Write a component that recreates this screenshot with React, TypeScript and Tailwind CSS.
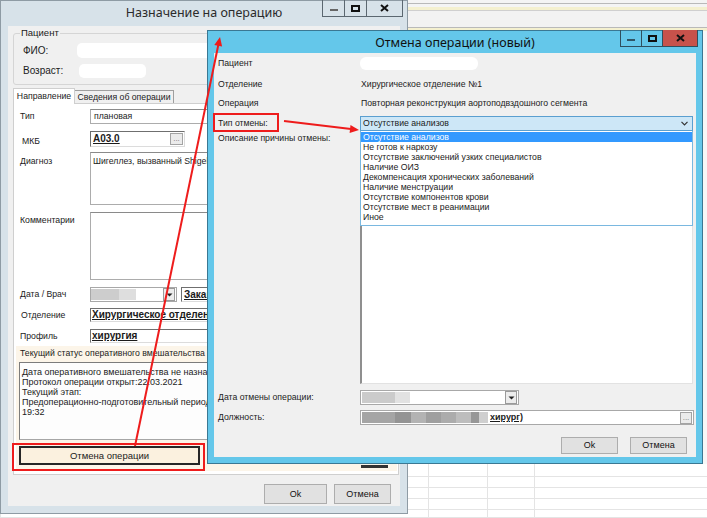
import React from "react";

const sunken =
  "border border-t-[#6f6f6f] border-l-[#6f6f6f] border-r-[#dcdcdc] border-b-[#dcdcdc] bg-white";
const plainBox = "border border-[#acacac] border-t-[#8a8a8a] bg-white";
const winBtn =
  "flex items-center justify-center border border-[#adadad] bg-[#e1e1e1] text-[9px] text-[#111]";

function XGlyph() {
  return (
    <svg width="9" height="8" viewBox="0 0 9 8">
      <path d="M1 1 L8 7 M8 1 L1 7" stroke="#111" strokeWidth="2" fill="none" />
    </svg>
  );
}

function DownTri() {
  return (
    <svg width="7" height="4" viewBox="0 0 7 4">
      <path d="M0.5 0.5 H6.5 L3.5 3.5 Z" fill="#222" />
    </svg>
  );
}

function Backdrop() {
  const cells = Array.from({ length: 20 });
  return (
    <div className="flex h-full w-full flex-col">
      <div className="h-[3px] bg-[#f4f4f4]" />
      <div className="h-px bg-[#b9b9b9]" />
      <div className="h-[3px] bg-[#f4f4f4]" />
      <div className="h-[3px] bg-[#f4f0cf]" />
      <div className="h-px bg-[#cfcfcf]" />
      <div className="h-[16px] bg-[#f2f2f2]" />
      <div className="h-px bg-[#b9b9b9]" />
      <div className="h-[3px] bg-[#f4f0cf]" />
      <div className="flex-1 bg-[#f7f7f7]" />
      <div className="grid h-[54px] grid-cols-[428px_59px_47px_1fr] grid-rows-[13px_11px_11px_11px_8px] bg-white">
        {cells.map((_, i) => (
          <div key={i} className="border-b border-l border-[#e4e4e4]" />
        ))}
      </div>
    </div>
  );
}

function MainWindow() {
  return (
    <div className="absolute left-0 top-0 flex h-[514px] w-[408px] flex-col border border-[#8e9ba4] bg-[#d7e2e9]">
      {/* title bar */}
      <div className="grid h-[25px] grid-cols-[1fr_auto_1fr] items-start">
        <div />
        <div className="mt-[5px] font-['Noto_Sans',sans-serif] text-[12.5px] leading-[14px] text-[#2b2b2b]">
          Назначение на операцию
        </div>
        <div className="flex justify-end pr-[4px]">
          <div className="-mt-px flex h-[17px] border border-t-0 border-[#5b6770]">
            <div className="flex w-[22px] items-end justify-center border-r border-[#5b6770] pb-[5px]">
              <div className="h-[2px] w-[8px] bg-[#666]" />
            </div>
            <div className="flex w-[22px] items-center justify-center border-r border-[#5b6770]">
              <div className="h-[7px] w-[9px] border-2 border-[#111]" />
            </div>
            <div className="flex w-[35px] items-center justify-center">
              <XGlyph />
            </div>
          </div>
        </div>
      </div>

      {/* client */}
      <div className="mx-[7px] mb-[7px] flex flex-1 flex-col bg-[#f0f0f0]">
        <fieldset className="mx-[5px] mt-[2px] h-[57px] rounded-[3px] border border-[#d5d5d5]">
          <legend className="ml-[6px] px-px text-[9.5px] leading-[10px]">Пациент</legend>
          <div className="flex flex-col">
            <div className="mt-[5px] flex h-[15px] items-center">
              <span className="w-[63px] shrink-0 pl-[9px] text-[10px]">ФИО:</span>
              <div className="h-[15px] w-[300px] rounded-[5px] bg-white" />
            </div>
            <div className="mt-[6px] flex h-[14px] items-center">
              <span className="w-[65px] shrink-0 pl-[9px] text-[10px]">Возраст:</span>
              <div className="h-[14px] w-[67px] rounded-[5px] bg-white" />
            </div>
          </div>
        </fieldset>

        {/* tabs */}
        <div className="ml-[5px] mt-[3px] flex h-[15px] items-end">
          <div className="relative z-10 -mb-px flex h-[16px] w-[62px] items-center justify-center border border-b-0 border-[#cfcfcf] bg-white">
            Направление
          </div>
          <div className="flex h-[13px] w-[99px] items-center justify-center border border-b-0 border-l-0 border-[#9f9f9f] bg-[#f0f0f0]">
            Сведения об операции
          </div>
        </div>

        {/* tab panel */}
        <div className="ml-[5px] flex h-[372px] w-[386px] flex-col border border-[#cfcfcf] bg-white">
          <div className="mt-[5px] flex h-[15px] items-center">
            <span className="w-[76px] shrink-0 pl-[6px]">Тип</span>
            <div className={`mr-[6px] flex h-full flex-1 items-center pl-[3px] ${plainBox}`}>плановая</div>
          </div>

          <div className="mt-[7px] flex h-[16px] items-center">
            <span className="mt-[4px] w-[76px] shrink-0 pl-[8px]">МКБ</span>
            <div className={`flex h-full w-[95px] items-center justify-between pl-[2px] pr-px ${sunken}`}>
              <span className="text-[10px] font-bold underline">А03.0</span>
              <div className="flex h-[12px] w-[13px] items-center justify-center border border-[#a3a3a3] bg-[#ebebeb] text-[8px] text-[#777]">
                ...
              </div>
            </div>
          </div>

          <div className="mt-[5px] flex h-[53px] items-start">
            <span className="w-[76px] shrink-0 pl-[6px] pt-[5px]">Диагноз</span>
            <div className={`mr-[6px] h-full flex-1 whitespace-nowrap pl-[2px] pt-[4px] ${plainBox}`}>
              Шигеллез, вызванный Shigella
            </div>
          </div>

          <div className="mt-[7px] flex h-[68px] items-start">
            <span className="w-[76px] shrink-0 pl-[6px] pt-[4px]">Комментарии</span>
            <div className={`mr-[6px] h-full flex-1 ${plainBox}`} />
          </div>

          <div className="mt-[7px] flex h-[15px] items-center">
            <span className="w-[76px] shrink-0 pl-[6px]">Дата / Врач</span>
            <div className="flex h-full w-[87px] items-center border border-[#a8a8a8] bg-white">
              <div className="h-[11px] w-[28px] bg-[#cdcdcd]" />
              <div className="h-[11px] w-[17px] bg-[#dedede]" />
              <div className="ml-auto mr-px flex h-[13px] w-[12px] items-center justify-center border border-[#9a9a9a] bg-[#ececec]">
                <DownTri />
              </div>
            </div>
            <div className={`ml-[4px] mr-[6px] flex h-full flex-1 items-center pl-[2px] ${sunken}`}>
              <span className="text-[10px] font-bold underline">Закам</span>
            </div>
          </div>

          <div className="mt-[6px] flex h-[14px] items-center">
            <span className="w-[76px] shrink-0 pl-[7px]">Отделение</span>
            <div className={`mr-[6px] flex h-full flex-1 items-center pl-px ${sunken}`}>
              <span className="whitespace-nowrap text-[10px] font-bold underline">Хирургическое отделени</span>
            </div>
          </div>

          <div className="mt-[7px] flex h-[14px] items-center">
            <span className="w-[76px] shrink-0 pl-[6px]">Профиль</span>
            <div className={`mr-[6px] flex h-full flex-1 items-center pl-px ${sunken}`}>
              <span className="text-[10px] font-bold underline">хирургия</span>
            </div>
          </div>

          {/* status block */}
          <div className="mb-[3px] ml-[2px] mr-px mt-[3px] flex flex-1 flex-col bg-[#fcf5e9]">
            <div className="flex h-[14px] items-center whitespace-nowrap pl-[4px]">
              Текущий статус оперативного вмешательства
            </div>
            <div className="ml-[3px] mr-[6px] mt-[2px] h-[78px] whitespace-nowrap border border-[#a6a6a6] border-l-[#7c7c7c] border-t-[#7c7c7c] bg-[#fdfdfd] pl-[2px] pt-[4px] text-[9px] leading-[10px]">
              <div>Дата оперативного вмешательства не назнач</div>
              <div>Протокол операции открыт:22.03.2021</div>
              <div>Текущий этап:</div>
              <div>Предоперационно-подготовительный период С</div>
              <div>19:32</div>
            </div>
            <div className="mt-[6px] flex items-start">
              <div className="ml-[3px] flex h-[19px] w-[181px] items-center justify-center border-2 border-[#262626] bg-[#fbf1df] text-[9.5px]">
                Отмена операции
              </div>
              <div className="ml-[161px] h-[22px] w-[27px] border-b-[3px] border-[#333]" />
            </div>
          </div>
        </div>

        {/* bottom buttons */}
        <div className="mt-[9px] flex justify-end gap-[7px] pr-[9px]">
          <div className={`h-[20px] w-[63px] ${winBtn}`}>Ok</div>
          <div className={`h-[20px] w-[57px] ${winBtn}`}>Отмена</div>
        </div>
      </div>
    </div>
  );
}

const reasons = [
  "Отсутствие анализов",
  "Не готов к наркозу",
  "Отсутствие заключений узких специалистов",
  "Наличие ОИЗ",
  "Декомпенсация хронических заболеваний",
  "Наличие менструации",
  "Отсутствие компонентов крови",
  "Отсутствие мест в реанимации",
  "Иное",
];

const blurBlocks: [string, string][] = [
  ["w-[33px]", "bg-[#a5a5a5]"],
  ["w-[16px]", "bg-[#949494]"],
  ["w-[15px]", "bg-[#b3b3b3]"],
  ["w-[15px]", "bg-[#9f9f9f]"],
  ["w-[15px]", "bg-[#acacac]"],
  ["w-[15px]", "bg-[#bdbdbd]"],
  ["w-[8px]", "bg-[#979797]"],
  ["w-[9px]", "bg-[#cfcfcf]"],
];

function CancelDialog() {
  return (
    <div className="absolute left-[207px] top-[30px] flex h-[434px] w-[496px] flex-col border border-[#3a7893] bg-[#64c7ea]">
      <div className="grid h-[22px] grid-cols-[1fr_auto_1fr] items-start">
        <div />
        <div className="mt-[5px] font-['Noto_Sans',sans-serif] text-[12.5px] leading-[14px] text-[#111]">
          Отмена операции (новый)
        </div>
        <div className="flex justify-end pr-[4px]">
          <div className="-mt-px flex h-[17px] border border-t-0 border-[#2f4f5e]">
            <div className="flex w-[21px] items-end justify-center border-r border-[#2f4f5e] pb-[5px]">
              <div className="h-[2px] w-[8px] bg-[#2f5566]" />
            </div>
            <div className="flex w-[21px] items-center justify-center border-r border-[#2f4f5e]">
              <div className="h-[7px] w-[9px] border-2 border-[#111]" />
            </div>
            <div className="flex w-[34px] items-center justify-center bg-[#c7524b]">
              <XGlyph />
            </div>
          </div>
        </div>
      </div>

      <div className="mx-[6px] mb-[6px] flex flex-1 flex-col bg-[#f0f0f0]">
        <div className="mt-[4px] flex h-[13px] items-center">
          <span className="w-[146px] shrink-0 pl-[4px]">Пациент</span>
          <div className="h-full w-[118px] rounded-[6px] bg-white" />
        </div>
        <div className="mt-[8px] flex h-[12px] items-center">
          <span className="w-[146px] shrink-0 pl-[4px]">Отделение</span>
          <span className="pl-px">Хирургическое отделение №1</span>
        </div>
        <div className="mt-[7px] flex h-[12px] items-center">
          <span className="w-[146px] shrink-0 pl-[4px]">Операция</span>
          <span className="pl-px">Повторная реконструкция аортоподвздошного сегмента</span>
        </div>
        <div className="mt-[7px] flex h-[15px] items-center">
          <span className="w-[146px] shrink-0 pl-[4px]">Тип отмены:</span>
          <div className="relative h-full w-[333px]">
            <div className="flex h-full items-center justify-between border border-[#5a9fd0] bg-[#cde7f7] pl-[2px] pr-[4px]">
              <span>Отсутствие анализов</span>
              <svg width="7" height="5" viewBox="0 0 7 5">
                <path d="M0.5 0.8 L3.5 3.8 L6.5 0.8" stroke="#333" strokeWidth="1.2" fill="none" />
              </svg>
            </div>
            <div className="absolute left-0 top-full z-10 w-full border border-t-0 border-[#7ab8e0] bg-white pb-[3px] pt-px">
              {reasons.map((r, i) => (
                <div
                  key={r}
                  className={
                    i === 0
                      ? "h-[10px] bg-[#3399ff] px-[2px] leading-[10px] text-white"
                      : "h-[10px] px-[2px] leading-[10px]"
                  }
                >
                  {r}
                </div>
              ))}
            </div>
          </div>
        </div>
        <div className="mt-[2px] flex h-[251px] items-start">
          <span className="w-[146px] shrink-0 pl-[4px] pt-px">Описание причины отмены:</span>
          <div className="h-full w-[333px] border border-l-2 border-[#8f8f8f] border-b-[#e2e2e2] border-r-[#e2e2e2] bg-white" />
        </div>
        <div className="mt-[6px] flex h-[15px] items-center">
          <span className="w-[146px] shrink-0 pl-[4px]">Дата отмены операции:</span>
          <div className="flex h-full w-[159px] items-center border border-[#a8a8a8] bg-white">
            <div className="ml-px h-[11px] w-[33px] bg-[#cbcbcb]" />
            <div className="h-[11px] w-[15px] bg-[#e2e2e2]" />
            <div className="ml-auto mr-px flex h-[13px] w-[12px] items-center justify-center border border-[#9a9a9a] bg-[#ececec]">
              <DownTri />
            </div>
          </div>
        </div>
        <div className="mt-[5px] flex h-[15px] items-center">
          <span className="w-[146px] shrink-0 pl-[4px]">Должность:</span>
          <div className="flex h-full w-[334px] items-center border border-[#a8a8a8] bg-white">
            <div className="ml-px flex h-[11px]">
              {blurBlocks.map(([w, c], i) => (
                <div key={i} className={`h-full ${w} ${c}`} />
              ))}
            </div>
            <span className="ml-[2px] text-[9px] font-bold underline">хирург)</span>
            <div className="ml-auto mr-px flex h-[12px] w-[12px] items-center justify-center border border-[#a3a3a3] bg-[#ebebeb] text-[8px] text-[#777]">
              ...
            </div>
          </div>
        </div>
        <div className="mt-[12px] flex justify-end gap-[12px] pr-[9px]">
          <div className={`h-[17px] w-[57px] ${winBtn}`}>Ok</div>
          <div className={`h-[17px] w-[57px] ${winBtn}`}>Отмена</div>
        </div>
      </div>
    </div>
  );
}

function Annotations() {
  return (
    <svg className="pointer-events-none absolute left-0 top-0" width="707" height="518" viewBox="0 0 707 518">
      <rect x="13" y="444" width="191" height="26" fill="none" stroke="#ee1c1c" strokeWidth="2" />
      <rect x="214" y="114" width="64" height="17" fill="none" stroke="#ee1c1c" strokeWidth="2" />
      <line x1="135" y1="446" x2="218.5" y2="44" stroke="#ee1c1c" strokeWidth="2" />
      <polygon points="220,37 222.1,46.6 214.3,45" fill="#ee1c1c" />
      <line x1="284" y1="121" x2="351" y2="129" stroke="#ee1c1c" strokeWidth="2" />
      <polygon points="359,130 349.6,132.9 350.5,125" fill="#ee1c1c" />
    </svg>
  );
}

export default function App() {
  return (
    <div className="relative h-[518px] w-[707px] overflow-hidden bg-[#f7f7f7] font-['Liberation_Sans',Arial,sans-serif] text-[8.7px] leading-none text-[#1b1b1b]">
      <Backdrop />
      <MainWindow />
      <CancelDialog />
      <Annotations />
    </div>
  );
}
